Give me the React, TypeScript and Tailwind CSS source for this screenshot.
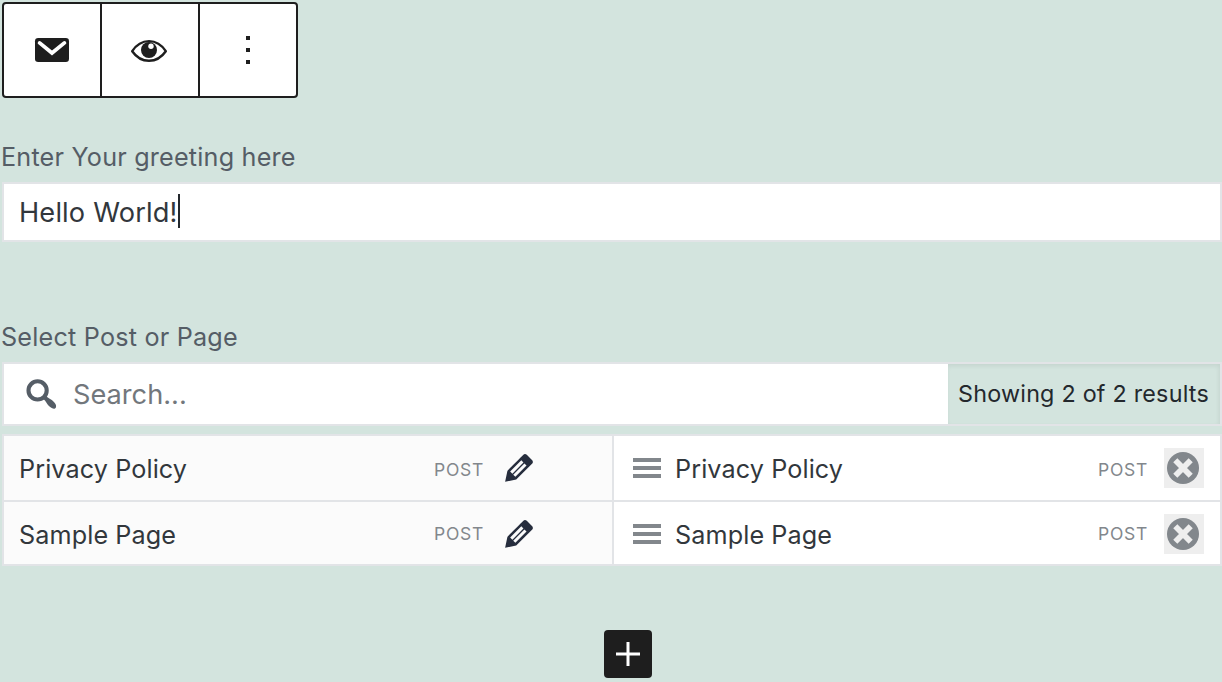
import React from 'react';

function MailIcon() {
  return (
    <svg width="40" height="40" viewBox="0 0 40 40">
      <rect x="3" y="8" width="34" height="24" rx="3.2" fill="#1e1e1e" />
      <path d="M7.6 12.9 20 23l12.4-10.1" fill="none" stroke="#fff" strokeWidth="3.8" strokeLinecap="round" />
    </svg>
  );
}

function EyeIcon() {
  return (
    <svg width="40" height="40" viewBox="0 0 40 40">
      <path d="M3.2 21.2C12 7.8 28 7.8 36.8 21.2 28 33.9 12 33.9 3.2 21.2Z" fill="none" stroke="#1e1e1e" strokeWidth="2.4" strokeLinejoin="round" />
      <circle cx="20" cy="20" r="8" fill="#1e1e1e" />
      <circle cx="22" cy="16.2" r="2.7" fill="#fff" />
    </svg>
  );
}

function SearchIcon() {
  return (
    <svg width="40" height="40" viewBox="0 0 40 40">
      <circle cx="16.6" cy="16.4" r="9.1" fill="none" stroke="#555d66" strokeWidth="4.1" />
      <path d="M21.4 24.6 24.8 21.2C25.6 23 27.6 24 30 25.6 33 27.8 36 30.8 34.9 33.4 33.4 36.4 28.8 33.6 26.6 30.6 24.8 27.8 23.6 25.6 21.4 24.6Z" fill="#555d66" />
    </svg>
  );
}

function EditIcon() {
  return (
    <svg width="40" height="40" viewBox="0 0 20 20" className="shrink-0">
      <path className="fill-[#262d3d]" d="m13.89 3.39 2.71 2.72c.46.46.42 1.24.03 1.64l-8.01 8.02-5.56 1.16 1.16-5.58s7.6-7.63 7.99-8.03c.39-.39 1.22-.39 1.68.07zm-2.73 2.79-5.59 5.61 1.11 1.11 5.54-5.65zm-2.97 8.23 5.58-5.6-1.07-1.08-5.59 5.6z" />
    </svg>
  );
}

function DismissIcon() {
  return (
    <svg width="40" height="40" viewBox="0 0 40 40">
      <circle cx="19" cy="20" r="16" fill="#82878c" />
      <path d="m11.3 12.3 15.4 15.4m0-15.4L11.3 27.7" stroke="#eee" strokeWidth="5.8" />
    </svg>
  );
}

function Handle() {
  return (
    <div className="flex w-7 shrink-0 flex-col gap-1">
      <div className="h-1 bg-[#82878c]" />
      <div className="h-1 bg-[#82878c]" />
      <div className="h-1 bg-[#82878c]" />
    </div>
  );
}

const items = [
  { title: 'Privacy Policy', type: 'POST', name: 'mt-1', kind: 'mt-[5px]' },
  { title: 'Sample Page', type: 'POST', name: 'mt-1', kind: 'mt-px' },
];

export default function App() {
  return (
    <div className="h-[682px] w-[1222px] overflow-hidden bg-[#d3e4de] pt-0.5 pl-0.5 font-[Inter,sans-serif]">
      <div className="flex h-24 w-[296px] divide-x-2 divide-[#1e1e1e] rounded border-2 border-[#1e1e1e] bg-white">
        <button className="flex w-[98px] items-center justify-center"><MailIcon /></button>
        <button className="flex w-[98px] items-center justify-center pr-0.5"><EyeIcon /></button>
        <button className="flex w-24 flex-col items-center justify-center gap-2">
          <span className="h-1 w-1 bg-[#1e1e1e]" />
          <span className="h-1 w-1 bg-[#1e1e1e]" />
          <span className="h-1 w-1 bg-[#1e1e1e]" />
        </button>
      </div>

      <label className="-ml-px block h-[84px] pt-[43px] text-[25.2px] leading-8 tracking-[0.2px] whitespace-nowrap text-[#555d66]">
        Enter Your greeting here
      </label>
      <div className="flex h-[60px] items-center border-2 border-[#e2e4e7] bg-white pl-[15px] text-[27.2px] whitespace-nowrap text-[#32373c]">
        <span className="mt-[3px] tracking-[0.16px]">Hello World!</span>
        <span className="-mt-0.5 h-[34px] w-0.5 bg-[#23282d]" />
      </div>

      <label className="-ml-px block h-[120px] pt-[79px] text-[25.2px] leading-8 tracking-[0.2px] whitespace-nowrap text-[#555d66]">
        Select Post or Page
      </label>
      <div className="flex h-16 border-2 border-[#e2e4e7]">
        <div className="flex w-[944px] items-center bg-white pl-[17px]">
          <SearchIcon />
          <span className="mt-[3px] ml-3 text-[27.2px] text-[#72777c]">Search...</span>
        </div>
        <div className="flex flex-1 items-center pl-2.5 text-[23.3px] tracking-[0.23px] whitespace-nowrap text-[#23282d] shadow-[inset_-1px_2px_4px_rgba(0,0,0,0.07)]">
          Showing 2 of 2 results
        </div>
      </div>

      <div className="mt-2 flex h-[132px] border-2 border-[#e2e4e7] text-[25.2px] tracking-[0.1px] whitespace-nowrap text-[#32373c]">
        <div className="w-[610px] divide-y-2 divide-[#e2e4e7] border-r-2 border-[#e2e4e7] bg-[#fbfbfb]">
          {items.map((item) => (
            <div key={item.title} className="flex h-[66px] items-center pl-[15px] last:h-[62px] last:pt-0.5">
              <span className={`w-[415px] ${item.name}`}>{item.title}</span>
              <span className={`w-[65px] text-[17.5px] tracking-[0.7px] text-[#82878c] ${item.kind}`}>{item.type}</span>
              <EditIcon />
            </div>
          ))}
        </div>
        <div className="flex-1 divide-y-2 divide-[#e2e4e7] bg-white">
          {items.map((item) => (
            <div key={item.title} className="flex h-[66px] items-center pr-4 pl-[19px] last:h-[62px] last:pt-0.5">
              <Handle />
              <span className={`ml-3.5 flex-1 ${item.name}`}>{item.title}</span>
              <span className={`w-[66px] text-[17.5px] tracking-[0.7px] text-[#82878c] ${item.kind}`}>{item.type}</span>
              <button className="h-10 w-10 bg-[#eee]"><DismissIcon /></button>
            </div>
          ))}
        </div>
      </div>

      <button className="mt-16 ml-[602px] flex h-12 w-12 items-center justify-center rounded bg-[#1e1e1e]">
        <svg width="24" height="24" viewBox="0 0 24 24">
          <path d="M0 12h24M12 0v24" stroke="#fff" strokeWidth="3" />
        </svg>
      </button>
    </div>
  );
}
